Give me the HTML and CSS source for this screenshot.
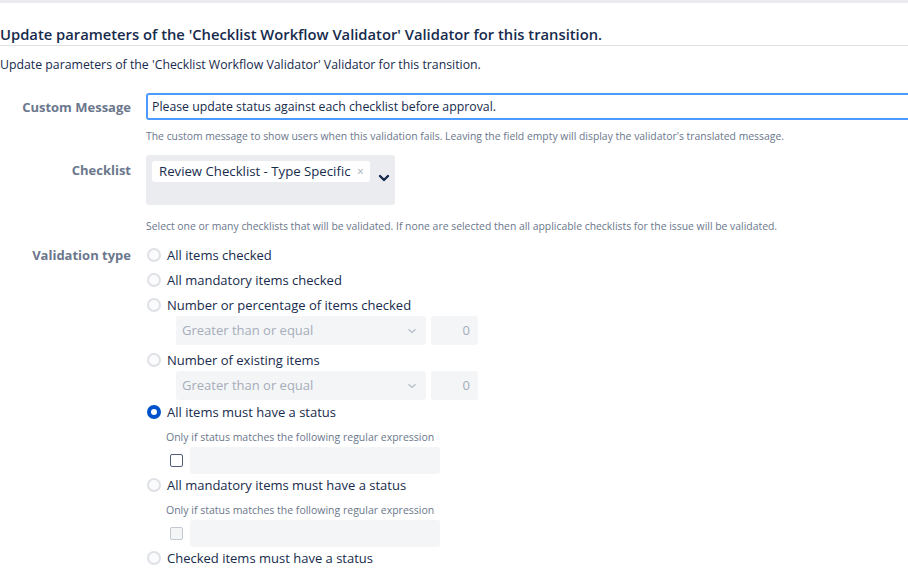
FILE: index.html
```html
<!DOCTYPE html>
<html lang="en">
<head>
  <meta charset="UTF-8">
  <title>Checklist Workflow Validator</title>
  <link rel="stylesheet" href="styles.css">
</head>
<body>
  <div class="topbar"></div>

  <h2 class="page-title">Update parameters of the 'Checklist Workflow Validator' Validator for this transition.</h2>
  <p class="page-desc">Update parameters of the 'Checklist Workflow Validator' Validator for this transition.</p>

  <div class="form">
    <!-- Custom message -->
    <div class="field">
      <label class="field-label label-msg">Custom Message</label>
      <div class="field-body">
        <input type="text" class="text-input active" value="Please update status against each checklist before approval.">
        <div class="help help-msg">The custom message to show users when this validation fails. Leaving the field empty will display the validator's translated message.</div>
      </div>
    </div>

    <!-- Checklist -->
    <div class="field field-checklist">
      <label class="field-label label-checklist">Checklist</label>
      <div class="field-body">
        <div class="multi-select">
          <span class="tag">Review Checklist - Type Specific <span class="tag-x">×</span></span>
          <svg class="ms-chevron" width="12" height="8" viewBox="0 0 12 8"><path d="M2 2l4 4 4-4" fill="none" stroke="#172b4d" stroke-width="2.4" stroke-linecap="round" stroke-linejoin="round"/></svg>
        </div>
        <div class="help help-checklist">Select one or many checklists that will be validated. If none are selected then all applicable checklists for the issue will be validated.</div>
      </div>
    </div>

    <!-- Validation type -->
    <div class="field field-type">
      <label class="field-label label-type">Validation type</label>
      <div class="field-body choices">
        <div class="opt"><span class="radio"></span>All items checked</div>
        <div class="opt"><span class="radio"></span>All mandatory items checked</div>
        <div class="opt"><span class="radio"></span>Number or percentage of items checked</div>
        <div class="sub-row">
          <div class="select-disabled">Greater than or equal
            <svg class="sd-chevron" width="10" height="6" viewBox="0 0 10 6"><path d="M1.5 1.2l3.5 3.3 3.5-3.3" fill="none" stroke="#b3bac5" stroke-width="1.2"/></svg>
          </div>
          <div class="num-disabled">0</div>
        </div>
        <div class="opt opt-after-sub"><span class="radio"></span>Number of existing items</div>
        <div class="sub-row sub-row-2">
          <div class="select-disabled">Greater than or equal
            <svg class="sd-chevron" width="10" height="6" viewBox="0 0 10 6"><path d="M1.5 1.2l3.5 3.3 3.5-3.3" fill="none" stroke="#b3bac5" stroke-width="1.2"/></svg>
          </div>
          <div class="num-disabled">0</div>
        </div>
        <div class="opt opt-tight"><span class="radio checked"></span>All items must have a status</div>
        <div class="sub-help">Only if status matches the following regular expression</div>
        <div class="regex-row">
          <span class="checkbox"></span>
          <div class="regex-input"></div>
        </div>
        <div class="opt opt-tight"><span class="radio"></span>All mandatory items must have a status</div>
        <div class="sub-help">Only if status matches the following regular expression</div>
        <div class="regex-row">
          <span class="checkbox disabled"></span>
          <div class="regex-input"></div>
        </div>
        <div class="opt opt-tight"><span class="radio"></span>Checked items must have a status</div>
      </div>
    </div>
  </div>
</body>
</html>
```

FILE: styles.css
```css
body {
  margin: 0;
  background: #fff;
  color: #172b4d;
  font-family: "Open Sans", "Noto Sans", Arial, sans-serif;
  width: 908px;
  overflow: hidden;
}
.topbar {
  height: 3px;
  background-color: #ebecf0;
}
.page-title {
  margin: 21px 0 0 0;
  font-size: 14.75px;
  font-weight: 600;
  line-height: 20px;
  padding-bottom: 1px;
  border-bottom: 1px solid #dfe1e6;
  color: #172b4d;
}
.page-desc {
  margin: 11px 0 0 0;
  font-size: 12.3px;
  line-height: 16px;
}
.form {
  margin-top: 20px;
}
.field {
  display: flex;
}
.field-label {
  width: 131px;
  flex: none;
  text-align: right;
  padding-right: 15px;
  font-size: 13px;
  font-weight: 700;
  color: #6b778c;
}
.label-msg {
  line-height: 27px;
  padding-top: 1px;
}
.field-body {
  flex: 1;
  min-width: 0;
}
.text-input {
  display: block;
  box-sizing: border-box;
  width: 780px;
  height: 27px;
  margin: 0;
  padding: 0 4px;
  border: 2px solid #4c9aff;
  border-radius: 3px;
  font-family: inherit;
  font-size: 12.3px;
  color: #172b4d;
  outline: none;
  background: #fff;
}
.help {
  font-size: 10.4px;
  line-height: 14px;
  color: #6b778c;
  white-space: nowrap;
}
.help-msg {
  margin-top: 9px;
}
.field-checklist {
  margin-top: 12px;
}
.label-checklist {
  padding-top: 5px;
  line-height: 20px;
}
.multi-select {
  position: relative;
  width: 249px;
  height: 50px;
  box-sizing: border-box;
  background-color: #ebecf0;
  border-radius: 3px;
  padding: 4px 6px;
}
.tag {
  display: inline-block;
  background: #fff;
  border-radius: 3px;
  font-size: 13.2px;
  line-height: 20px;
  padding: 0 6px 0 7px;
  color: #172b4d;
}
.tag-x {
  color: #a5adba;
  font-size: 12px;
  margin-left: 3px;
}
.ms-chevron {
  position: absolute;
  left: 232px;
  top: 19px;
}
.help-checklist {
  margin-top: 14px;
}
.field-type {
  margin-top: 11px;
}
.label-type {
  line-height: 20px;
  padding-top: 1px;
}
.choices {
  display: flex;
  flex-direction: column;
}
.opt {
  display: flex;
  align-items: center;
  height: 22px;
  font-size: 13px;
  color: #172b4d;
  margin-bottom: 3px;
}
.opt-after-sub {
  margin-top: 4px;
  margin-bottom: 0;
}
.opt-tight {
  margin-bottom: 0;
}
.radio {
  width: 10px;
  height: 10px;
  border: 2px solid #dfe1e6;
  background: #fafbfc;
  border-radius: 50%;
  margin: 0 6px 0 1px;
  flex: none;
}
.radio.checked {
  width: 6px;
  height: 6px;
  border: 4px solid #0052cc;
  background: #fff;
}
.sub-row {
  display: flex;
  gap: 5px;
  margin-left: 30px;
  margin-top: -3px;
}
.sub-row-2 {
  margin-top: 0;
  margin-bottom: 1px;
}
.select-disabled {
  position: relative;
  width: 250px;
  height: 29px;
  box-sizing: border-box;
  background: #f4f5f7;
  border-radius: 3px;
  padding-left: 6px;
  font-size: 13px;
  line-height: 29px;
  color: #a5adba;
}
.sd-chevron {
  position: absolute;
  right: 9px;
  top: 12px;
}
.num-disabled {
  width: 47px;
  height: 29px;
  box-sizing: border-box;
  background: #f4f5f7;
  border-radius: 3px;
  padding-right: 8px;
  text-align: right;
  font-size: 13px;
  line-height: 29px;
  color: #a5adba;
}
.sub-help {
  margin: 7px 0 0 20px;
  font-size: 10.5px;
  line-height: 14px;
  color: #6b778c;
}
.regex-row {
  display: flex;
  align-items: center;
  margin: 3px 0 0 24px;
}
.checkbox {
  width: 11px;
  height: 11px;
  border: 1px solid #505f79;
  border-radius: 2px;
  background: #fff;
  flex: none;
}
.checkbox.disabled {
  border-color: #c1c7d0;
  background: #f4f5f7;
}
.regex-input {
  width: 250px;
  height: 27px;
  margin-left: 7px;
  background: #f4f5f7;
  border-radius: 3px;
}
```
